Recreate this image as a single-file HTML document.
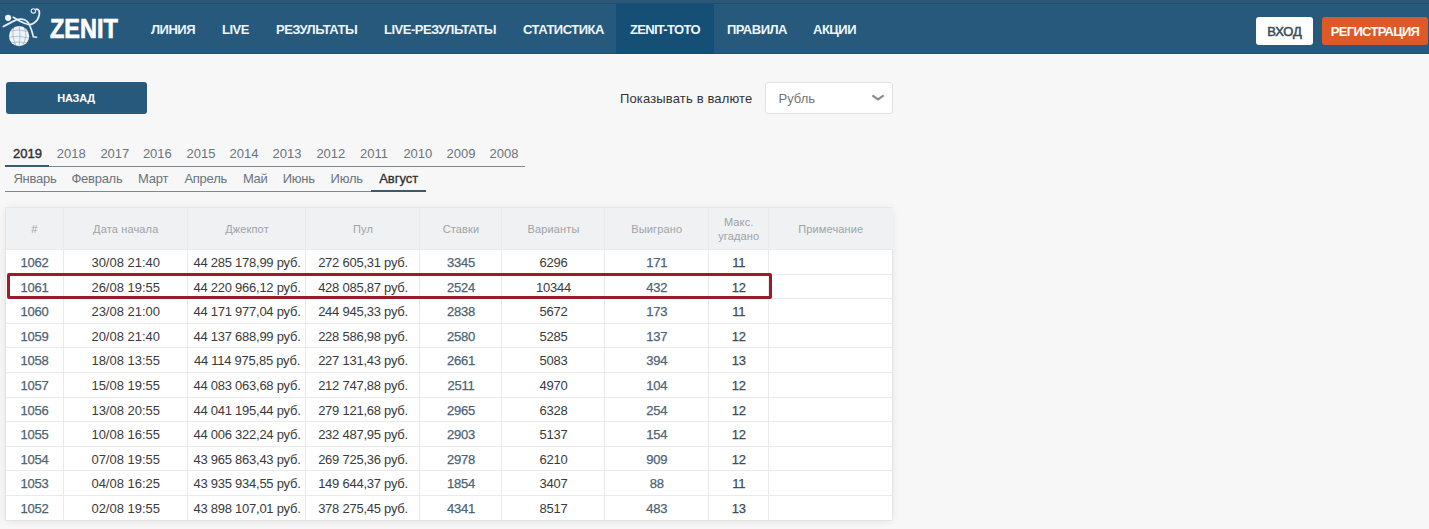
<!DOCTYPE html>
<html><head><meta charset="utf-8">
<style>
*{margin:0;padding:0;box-sizing:border-box}
html,body{width:1429px;height:529px;overflow:hidden;background:#f7f7f7;font-family:"Liberation Sans",sans-serif}
.hdr{position:absolute;left:0;top:0;width:1429px;height:54px;background:#27597d;border-bottom:1px solid #235172}
.hdr .strip{position:absolute;left:0;top:0;width:1429px;height:4px;background:#2b5779;border-bottom:1px solid #214a6b}
.logo{position:absolute;left:0;top:0}
.brand{position:absolute;left:50px;top:12px;font-size:27px;line-height:34px;font-weight:bold;color:#fff;-webkit-text-stroke:0.7px #fff;transform:scaleX(0.87);transform-origin:0 0}
.actbg{position:absolute;left:616px;top:4px;width:98px;height:50px;background:#154f75}
.nv{position:absolute;top:4px;height:51px;font-size:13px;font-weight:bold;color:#eef6fb;line-height:51px;white-space:nowrap;letter-spacing:-0.5px}
.btn{position:absolute;top:17px;height:28px;border-radius:3px;font-size:13px;font-weight:bold;line-height:30px;text-align:center;white-space:nowrap}
.b1{left:1256px;width:57px;background:#fff;color:#3b4d5b;font-weight:normal!important;-webkit-text-stroke:0.55px #3b4d5b;letter-spacing:-0.1px}
.b2{left:1322px;width:106px;background:#dd5a26;color:#fff;letter-spacing:-0.7px}
.back{position:absolute;left:5.5px;top:82px;width:141px;height:31.5px;background:#27597d;border-radius:3px;color:#fff;font-size:11px;font-weight:bold;text-align:center;line-height:33px;letter-spacing:-0.3px}
.curlbl{position:absolute;left:620px;top:91px;font-size:13px;color:#333;letter-spacing:0.15px}
.sel{position:absolute;left:765px;top:82px;width:128px;height:32px;background:#fff;border:1px solid #dfe2e5;border-radius:3px;font-size:13px;color:#777}
.rub{position:absolute;left:12.5px;top:7.5px}
.chev{position:absolute;left:104.5px;top:11px}
.tline{position:absolute;left:5px;height:1px;background:#7d8a93}
.tact{position:absolute;height:2.5px;background:#3b5a70}
.yr,.mo{position:absolute;font-size:13px;color:#6a747c;white-space:nowrap}
.yr{top:146px}
.mo{top:171px;letter-spacing:-0.25px}
.act{color:#2e2e2e;-webkit-text-stroke:0.4px #2e2e2e}
.mo.act{color:#2e2e2e;-webkit-text-stroke:0.3px #2e2e2e;letter-spacing:0}
.tbl{position:absolute;background:#fff;box-shadow:0 0 0 1px rgba(0,0,0,0.035),0 1px 8px rgba(0,0,0,0.09)}
.thead{position:absolute;left:0;top:0;width:887px;background:#eff1f3}
.vl{position:absolute;top:0;bottom:0;width:1px;background:#e8eaec}
.hl{position:absolute;left:0;width:887px;height:1px;background:#e8eaec}
.th{position:absolute;top:0;display:flex;align-items:center;justify-content:center;text-align:center;font-size:11px;line-height:14px;color:#9ea3a8;letter-spacing:0.15px}
.td{position:absolute;display:flex;align-items:center;justify-content:center;padding-top:1.5px;font-size:13px;color:#3a3a3a;white-space:nowrap;letter-spacing:-0.25px}
.c-id,.c-b{color:#4d6376;-webkit-text-stroke:0.25px #4d6376}
.c-m{color:#3f4c57;-webkit-text-stroke:0.25px #3f4c57}
.hil{position:absolute;left:7px;top:273.4px;width:764.5px;height:25.4px;border:3px solid #9d1a28;border-radius:2px}
.c-dt{letter-spacing:0}

</style></head><body>
<div class="hdr"><div class="strip"></div>
<svg class="logo" width="46" height="54" viewBox="0 0 46 54">
 <g stroke="#e6f0f6" fill="none" stroke-linecap="round">
 <path d="M3.4 26.6 Q12 21.5 15.5 20.3 Q20.5 18.2 24.5 19.8 Q27 21 28.5 23" stroke-width="1.75"/>
 <path d="M13.3 17.3 Q17 19.5 20 21.2 Q25 23.8 29.5 24.6 Q34.5 24 37.5 19.5 Q40 15 39.3 11.4 Q38.5 9 36.4 9.2" stroke-width="1.75"/>
 <path d="M29.2 24.3 Q31.6 29 33.4 36.8 L36.5 37.3" stroke-width="1.65"/>
 <circle cx="33.4" cy="10.9" r="2.2" stroke-width="1.1"/>
 </g>
 <circle cx="8.1" cy="17.8" r="3.1" fill="#eef5fa"/>
 <circle cx="19.1" cy="36.2" r="10.1" fill="#eef5fa"/>
 <path d="M10.5 31 Q19 28.5 27.5 31.5 M9.3 37 Q19 35 28.8 38 M11.5 42.8 Q19 41 26.5 43 M13.5 28 Q11.5 36 16 45.8 M19 26.2 Q21 34 19 46.2 M24.5 28 Q28 36 22.5 45.8" stroke="#8aa2b6" stroke-width="0.6" fill="none"/>
</svg>

<div class="brand">ZENIT</div>
<div class="actbg"></div>
<div class="nv" style="left:151px">ЛИНИЯ</div>
<div class="nv" style="left:222px">LIVE</div>
<div class="nv" style="left:276px">РЕЗУЛЬТАТЫ</div>
<div class="nv" style="left:384px">LIVE-РЕЗУЛЬТАТЫ</div>
<div class="nv" style="left:523px">СТАТИСТИКА</div>
<div class="nv" style="left:630px;letter-spacing:-0.7px">ZENIT-TOTO</div>
<div class="nv" style="left:727px">ПРАВИЛА</div>
<div class="nv" style="left:813px">АКЦИИ</div>
<div class="btn b1"><span>ВХОД</span></div>
<div class="btn b2"><span>РЕГИСТРАЦИЯ</span></div>
</div>
<div class="back"><span>НАЗАД</span></div>
<div class="curlbl">Показывать в валюте</div>
<div class="sel"><span class="rub">Рубль</span><svg class="chev" width="14" height="8" viewBox="0 0 14 8"><path d="M1.3 1.3 L7 5.3 L12.7 1.3" stroke="#8c8c8c" stroke-width="2.2" fill="none"/></svg></div>
<div class="tline" style="top:166px;width:519.5px"></div><div class="tact" style="left:5px;top:164.5px;width:44px"></div>
<div class="yr act" style="left:13px">2019</div>
<div class="yr" style="left:56.7px">2018</div>
<div class="yr" style="left:100.4px">2017</div>
<div class="yr" style="left:142.9px">2016</div>
<div class="yr" style="left:186.5px">2015</div>
<div class="yr" style="left:229.6px">2014</div>
<div class="yr" style="left:272.5px">2013</div>
<div class="yr" style="left:316.4px">2012</div>
<div class="yr" style="left:360px">2011</div>
<div class="yr" style="left:403.4px">2010</div>
<div class="yr" style="left:446.5px">2009</div>
<div class="yr" style="left:489.6px">2008</div>
<div class="tline" style="top:190.5px;width:420.5px"></div><div class="tact" style="left:371px;top:189.5px;width:54.5px"></div>
<div class="mo" style="left:13.4px">Январь</div>
<div class="mo" style="left:71.4px">Февраль</div>
<div class="mo" style="left:138px">Март</div>
<div class="mo" style="left:184.4px">Апрель</div>
<div class="mo" style="left:242.9px">Май</div>
<div class="mo" style="left:282.7px">Июнь</div>
<div class="mo" style="left:330.6px">Июль</div>
<div class="mo act" style="left:379.2px">Август</div>
<div class="tbl" style="left:5.5px;top:207.5px;width:886px;height:312.5px">
<div class="thead" style="height:42.0px"></div>
<div class="vl" style="left:57.0px"></div>
<div class="vl" style="left:181.5px"></div>
<div class="vl" style="left:299.5px"></div>
<div class="vl" style="left:413.5px"></div>
<div class="vl" style="left:495.5px"></div>
<div class="vl" style="left:598.5px"></div>
<div class="vl" style="left:702.0px"></div>
<div class="vl" style="left:762.5px"></div>
<div class="hl" style="top:41.5px"></div>
<div class="hl" style="top:66.0909090909091px"></div>
<div class="hl" style="top:90.68181818181819px"></div>
<div class="hl" style="top:115.27272727272727px"></div>
<div class="hl" style="top:139.86363636363637px"></div>
<div class="hl" style="top:164.45454545454544px"></div>
<div class="hl" style="top:189.04545454545453px"></div>
<div class="hl" style="top:213.63636363636363px"></div>
<div class="hl" style="top:238.22727272727272px"></div>
<div class="hl" style="top:262.8181818181818px"></div>
<div class="hl" style="top:287.4090909090909px"></div>
<div class="th" style="left:0px;width:58px;height:42.0px"><span>#</span></div>
<div class="th" style="left:58px;width:124.5px;height:42.0px"><span>Дата начала</span></div>
<div class="th" style="left:182.5px;width:118.0px;height:42.0px"><span>Джекпот</span></div>
<div class="th" style="left:300.5px;width:114.0px;height:42.0px"><span>Пул</span></div>
<div class="th" style="left:414.5px;width:82.0px;height:42.0px"><span>Ставки</span></div>
<div class="th" style="left:496.5px;width:103.0px;height:42.0px"><span>Варианты</span></div>
<div class="th" style="left:599.5px;width:103.5px;height:42.0px"><span>Выиграно</span></div>
<div class="th" style="left:703px;width:60.5px;height:42.0px"><span>Макс.<br>угадано</span></div>
<div class="th" style="left:763.5px;width:123.5px;height:42.0px"><span>Примечание</span></div>
<div class="td c-id" style="left:0px;top:42.00px;width:58px;height:24.59px">1062</div>
<div class="td c-dt" style="left:58px;top:42.00px;width:124.5px;height:24.59px">30/08 21:40</div>
<div class="td c-d" style="left:182.5px;top:42.00px;width:118.0px;height:24.59px">44 285 178,99 руб.</div>
<div class="td c-d" style="left:300.5px;top:42.00px;width:114.0px;height:24.59px">272 605,31 руб.</div>
<div class="td c-b" style="left:414.5px;top:42.00px;width:82.0px;height:24.59px">3345</div>
<div class="td c-d" style="left:496.5px;top:42.00px;width:103.0px;height:24.59px">6296</div>
<div class="td c-b" style="left:599.5px;top:42.00px;width:103.5px;height:24.59px">171</div>
<div class="td c-m" style="left:703px;top:42.00px;width:60.5px;height:24.59px">11</div>
<div class="td c-id" style="left:0px;top:66.59px;width:58px;height:24.59px">1061</div>
<div class="td c-dt" style="left:58px;top:66.59px;width:124.5px;height:24.59px">26/08 19:55</div>
<div class="td c-d" style="left:182.5px;top:66.59px;width:118.0px;height:24.59px">44 220 966,12 руб.</div>
<div class="td c-d" style="left:300.5px;top:66.59px;width:114.0px;height:24.59px">428 085,87 руб.</div>
<div class="td c-b" style="left:414.5px;top:66.59px;width:82.0px;height:24.59px">2524</div>
<div class="td c-d" style="left:496.5px;top:66.59px;width:103.0px;height:24.59px">10344</div>
<div class="td c-b" style="left:599.5px;top:66.59px;width:103.5px;height:24.59px">432</div>
<div class="td c-m" style="left:703px;top:66.59px;width:60.5px;height:24.59px">12</div>
<div class="td c-id" style="left:0px;top:91.18px;width:58px;height:24.59px">1060</div>
<div class="td c-dt" style="left:58px;top:91.18px;width:124.5px;height:24.59px">23/08 21:00</div>
<div class="td c-d" style="left:182.5px;top:91.18px;width:118.0px;height:24.59px">44 171 977,04 руб.</div>
<div class="td c-d" style="left:300.5px;top:91.18px;width:114.0px;height:24.59px">244 945,33 руб.</div>
<div class="td c-b" style="left:414.5px;top:91.18px;width:82.0px;height:24.59px">2838</div>
<div class="td c-d" style="left:496.5px;top:91.18px;width:103.0px;height:24.59px">5672</div>
<div class="td c-b" style="left:599.5px;top:91.18px;width:103.5px;height:24.59px">173</div>
<div class="td c-m" style="left:703px;top:91.18px;width:60.5px;height:24.59px">11</div>
<div class="td c-id" style="left:0px;top:115.77px;width:58px;height:24.59px">1059</div>
<div class="td c-dt" style="left:58px;top:115.77px;width:124.5px;height:24.59px">20/08 21:40</div>
<div class="td c-d" style="left:182.5px;top:115.77px;width:118.0px;height:24.59px">44 137 688,99 руб.</div>
<div class="td c-d" style="left:300.5px;top:115.77px;width:114.0px;height:24.59px">228 586,98 руб.</div>
<div class="td c-b" style="left:414.5px;top:115.77px;width:82.0px;height:24.59px">2580</div>
<div class="td c-d" style="left:496.5px;top:115.77px;width:103.0px;height:24.59px">5285</div>
<div class="td c-b" style="left:599.5px;top:115.77px;width:103.5px;height:24.59px">137</div>
<div class="td c-m" style="left:703px;top:115.77px;width:60.5px;height:24.59px">12</div>
<div class="td c-id" style="left:0px;top:140.36px;width:58px;height:24.59px">1058</div>
<div class="td c-dt" style="left:58px;top:140.36px;width:124.5px;height:24.59px">18/08 13:55</div>
<div class="td c-d" style="left:182.5px;top:140.36px;width:118.0px;height:24.59px">44 114 975,85 руб.</div>
<div class="td c-d" style="left:300.5px;top:140.36px;width:114.0px;height:24.59px">227 131,43 руб.</div>
<div class="td c-b" style="left:414.5px;top:140.36px;width:82.0px;height:24.59px">2661</div>
<div class="td c-d" style="left:496.5px;top:140.36px;width:103.0px;height:24.59px">5083</div>
<div class="td c-b" style="left:599.5px;top:140.36px;width:103.5px;height:24.59px">394</div>
<div class="td c-m" style="left:703px;top:140.36px;width:60.5px;height:24.59px">13</div>
<div class="td c-id" style="left:0px;top:164.95px;width:58px;height:24.59px">1057</div>
<div class="td c-dt" style="left:58px;top:164.95px;width:124.5px;height:24.59px">15/08 19:55</div>
<div class="td c-d" style="left:182.5px;top:164.95px;width:118.0px;height:24.59px">44 083 063,68 руб.</div>
<div class="td c-d" style="left:300.5px;top:164.95px;width:114.0px;height:24.59px">212 747,88 руб.</div>
<div class="td c-b" style="left:414.5px;top:164.95px;width:82.0px;height:24.59px">2511</div>
<div class="td c-d" style="left:496.5px;top:164.95px;width:103.0px;height:24.59px">4970</div>
<div class="td c-b" style="left:599.5px;top:164.95px;width:103.5px;height:24.59px">104</div>
<div class="td c-m" style="left:703px;top:164.95px;width:60.5px;height:24.59px">12</div>
<div class="td c-id" style="left:0px;top:189.55px;width:58px;height:24.59px">1056</div>
<div class="td c-dt" style="left:58px;top:189.55px;width:124.5px;height:24.59px">13/08 20:55</div>
<div class="td c-d" style="left:182.5px;top:189.55px;width:118.0px;height:24.59px">44 041 195,44 руб.</div>
<div class="td c-d" style="left:300.5px;top:189.55px;width:114.0px;height:24.59px">279 121,68 руб.</div>
<div class="td c-b" style="left:414.5px;top:189.55px;width:82.0px;height:24.59px">2965</div>
<div class="td c-d" style="left:496.5px;top:189.55px;width:103.0px;height:24.59px">6328</div>
<div class="td c-b" style="left:599.5px;top:189.55px;width:103.5px;height:24.59px">254</div>
<div class="td c-m" style="left:703px;top:189.55px;width:60.5px;height:24.59px">12</div>
<div class="td c-id" style="left:0px;top:214.14px;width:58px;height:24.59px">1055</div>
<div class="td c-dt" style="left:58px;top:214.14px;width:124.5px;height:24.59px">10/08 16:55</div>
<div class="td c-d" style="left:182.5px;top:214.14px;width:118.0px;height:24.59px">44 006 322,24 руб.</div>
<div class="td c-d" style="left:300.5px;top:214.14px;width:114.0px;height:24.59px">232 487,95 руб.</div>
<div class="td c-b" style="left:414.5px;top:214.14px;width:82.0px;height:24.59px">2903</div>
<div class="td c-d" style="left:496.5px;top:214.14px;width:103.0px;height:24.59px">5137</div>
<div class="td c-b" style="left:599.5px;top:214.14px;width:103.5px;height:24.59px">154</div>
<div class="td c-m" style="left:703px;top:214.14px;width:60.5px;height:24.59px">12</div>
<div class="td c-id" style="left:0px;top:238.73px;width:58px;height:24.59px">1054</div>
<div class="td c-dt" style="left:58px;top:238.73px;width:124.5px;height:24.59px">07/08 19:55</div>
<div class="td c-d" style="left:182.5px;top:238.73px;width:118.0px;height:24.59px">43 965 863,43 руб.</div>
<div class="td c-d" style="left:300.5px;top:238.73px;width:114.0px;height:24.59px">269 725,36 руб.</div>
<div class="td c-b" style="left:414.5px;top:238.73px;width:82.0px;height:24.59px">2978</div>
<div class="td c-d" style="left:496.5px;top:238.73px;width:103.0px;height:24.59px">6210</div>
<div class="td c-b" style="left:599.5px;top:238.73px;width:103.5px;height:24.59px">909</div>
<div class="td c-m" style="left:703px;top:238.73px;width:60.5px;height:24.59px">12</div>
<div class="td c-id" style="left:0px;top:263.32px;width:58px;height:24.59px">1053</div>
<div class="td c-dt" style="left:58px;top:263.32px;width:124.5px;height:24.59px">04/08 16:25</div>
<div class="td c-d" style="left:182.5px;top:263.32px;width:118.0px;height:24.59px">43 935 934,55 руб.</div>
<div class="td c-d" style="left:300.5px;top:263.32px;width:114.0px;height:24.59px">149 644,37 руб.</div>
<div class="td c-b" style="left:414.5px;top:263.32px;width:82.0px;height:24.59px">1854</div>
<div class="td c-d" style="left:496.5px;top:263.32px;width:103.0px;height:24.59px">3407</div>
<div class="td c-b" style="left:599.5px;top:263.32px;width:103.5px;height:24.59px">88</div>
<div class="td c-m" style="left:703px;top:263.32px;width:60.5px;height:24.59px">11</div>
<div class="td c-id" style="left:0px;top:287.91px;width:58px;height:24.59px">1052</div>
<div class="td c-dt" style="left:58px;top:287.91px;width:124.5px;height:24.59px">02/08 19:55</div>
<div class="td c-d" style="left:182.5px;top:287.91px;width:118.0px;height:24.59px">43 898 107,01 руб.</div>
<div class="td c-d" style="left:300.5px;top:287.91px;width:114.0px;height:24.59px">378 275,45 руб.</div>
<div class="td c-b" style="left:414.5px;top:287.91px;width:82.0px;height:24.59px">4341</div>
<div class="td c-d" style="left:496.5px;top:287.91px;width:103.0px;height:24.59px">8517</div>
<div class="td c-b" style="left:599.5px;top:287.91px;width:103.5px;height:24.59px">483</div>
<div class="td c-m" style="left:703px;top:287.91px;width:60.5px;height:24.59px">13</div>
</div>
<div class="hil"></div>
</body></html>
